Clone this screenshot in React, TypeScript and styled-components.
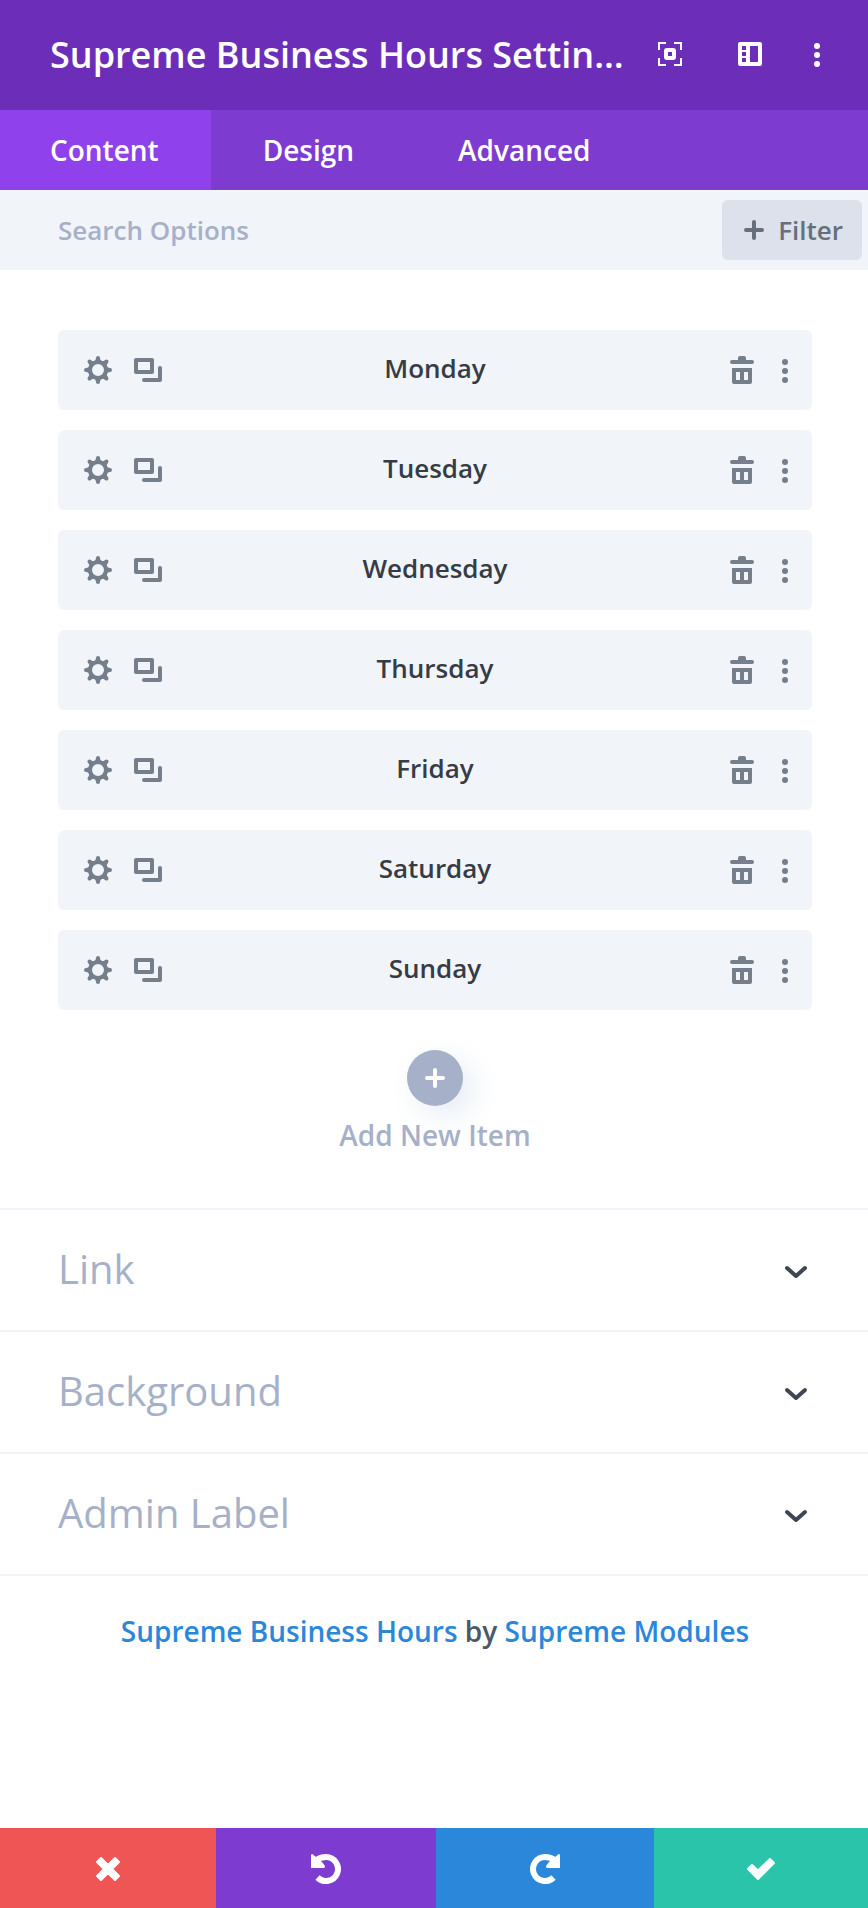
import React, { useState } from "react";
import styled, { createGlobalStyle } from "styled-components";

const GlobalStyle = createGlobalStyle`
  *, *::before, *::after { box-sizing: border-box; }
  body {
    margin: 0;
    background: #ffffff;
    font-family: "Open Sans", "Noto Sans", sans-serif;
    font-weight: 600;
  }
  button, input { font: inherit; }
  button { border: 0; padding: 0; background: none; cursor: pointer; }
  svg { display: block; }
`;

const Modal = styled.div`
  display: flex;
  flex-direction: column;
  min-height: 100vh;
`;

const Header = styled.header`
  display: flex;
  align-items: center;
  height: 110px;
  padding: 0 37px 0 50px;
  background: #6c2eb9;
  color: #ffffff;
`;

const Title = styled.h1`
  flex: 1;
  min-width: 0;
  margin: 0 26px 0 0;
  overflow: hidden;
  text-overflow: ellipsis;
  white-space: nowrap;
  font-size: 36px;
  line-height: 50px;
  font-weight: 600;
`;

const HeaderActions = styled.div`
  display: flex;
  align-items: center;
  gap: 52px;
  padding-bottom: 2px;
`;

const IconButton = styled.button<{ $pull?: boolean }>`
  display: flex;
  align-items: center;
  justify-content: center;
  width: 28px;
  height: 32px;
  margin-left: ${(p) => (p.$pull ? "-13px" : "0")};
  color: inherit;
`;

const Tabs = styled.div`
  display: flex;
  height: 80px;
  background: #7e3bd0;
`;

const Tab = styled.button<{ $active: boolean }>`
  padding: 0 52px;
  background: ${(p) => (p.$active ? "#8f42ec" : "transparent")};
  color: #ffffff;
  font-size: 28px;
  line-height: 40px;
  &:first-child { padding-left: 50px; }
`;

const SearchBar = styled.div`
  display: flex;
  align-items: center;
  height: 80px;
  padding: 0 6px 0 58px;
  background: #f1f4f9;
`;

const SearchInput = styled.input`
  flex: 1;
  min-width: 0;
  height: 60px;
  padding: 0;
  border: 0;
  outline: 0;
  background: transparent;
  color: #4c5866;
  font-size: 26px;
  &::placeholder { color: #a6b0c8; opacity: 1; }
`;

const FilterButton = styled.button`
  display: flex;
  align-items: center;
  gap: 14px;
  height: 60px;
  padding: 0 19px 0 22px;
  border-radius: 6px;
  background: #dce1eb;
  color: #66707c;
  font-size: 26px;
  line-height: 40px;
`;

const ItemsPanel = styled.section`
  display: flex;
  flex-direction: column;
  align-items: center;
  padding: 60px 56px 53px 58px;
`;

const ItemList = styled.ul`
  display: flex;
  flex-direction: column;
  gap: 20px;
  width: 100%;
  margin: 0 0 30px;
  padding: 0;
  list-style: none;
`;

const Item = styled.li`
  display: grid;
  grid-template-columns: 120px 1fr 120px;
  align-items: center;
  height: 80px;
  border-radius: 6px;
  background: #f1f4f9;
  color: #747f8b;
`;

const ItemTools = styled.div<{ $end?: boolean }>`
  display: flex;
  justify-content: ${(p) => (p.$end ? "flex-end" : "flex-start")};
  gap: ${(p) => (p.$end ? "15px" : "22px")};
  padding: ${(p) => (p.$end ? "0 13px 0 0" : "0 0 0 26px")};
`;

const ItemName = styled.span`
  padding-bottom: 4px;
  color: #363c46;
  font-size: 26px;
  line-height: 40px;
  text-align: center;
`;

const AddButton = styled.button`
  display: flex;
  flex-direction: column;
  align-items: center;
  gap: 9px;
  padding-top: 10px;
  color: #a6b0c8;
  font-size: 28px;
  line-height: 40px;
`;

const AddCircle = styled.span`
  display: flex;
  align-items: center;
  justify-content: center;
  width: 56px;
  height: 56px;
  border-radius: 50%;
  background: #a6b0c8;
  color: #ffffff;
  box-shadow: 10px 10px 32px #e4ebf4;
`;

const Toggle = styled.button`
  display: flex;
  align-items: center;
  justify-content: space-between;
  width: 100%;
  height: 122px;
  padding: 0 60px 2px 58px;
  border-top: 2px solid #f1f4f9;
  color: #a6b0c8;
  font-size: 40px;
  line-height: 56px;
  font-weight: 400;
  text-align: left;
`;

const Chevron = styled.span`
  padding-top: 6px;
  color: #3d4652;
`;

const Credits = styled.p`
  flex: 1;
  margin: 0;
  padding: 35px 20px 35px 22px;
  border-top: 2px solid #f1f4f9;
  color: #4c5866;
  font-size: 28px;
  line-height: 40px;
  text-align: center;
`;

const CreditLink = styled.a`
  color: #2b87da;
  text-decoration: none;
`;

const FooterBar = styled.footer`
  position: sticky;
  bottom: 0;
  display: grid;
  grid-template-columns: 216fr 220fr 218fr 214fr;
  height: 80px;
`;

const FooterButton = styled.button<{ $color: string }>`
  display: flex;
  align-items: center;
  justify-content: center;
  padding-top: 2px;
  background: ${(p) => p.$color};
  color: #ffffff;
`;

const DotsIcon = () => (
  <svg width="6" height="26" viewBox="0 0 6 26" fill="currentColor" aria-hidden="true">
    <circle cx="3" cy="5" r="3" />
    <circle cx="3" cy="14" r="3" />
    <circle cx="3" cy="23" r="3" />
  </svg>
);

const FocusIcon = () => (
  <svg width="24" height="24" viewBox="0 0 24 24" fill="none" stroke="currentColor" strokeWidth="2" aria-hidden="true">
    <path d="M1 8V1H8M16 1H23V8M23 16V23H16M8 23H1V16" />
    <rect x="8" y="8" width="8" height="8" rx="1" strokeWidth="4" />
  </svg>
);

const PanelIcon = () => (
  <svg width="24" height="24" viewBox="0 0 24 24" fill="currentColor" fillRule="evenodd" aria-hidden="true">
    <path d="M2 0H22Q24 0 24 2V22Q24 24 22 24H2Q0 24 0 22V2Q0 0 2 0ZM12 4V20H20V4ZM4 4V8H8V4ZM4 10V14H8V10ZM4 16V20H8V16Z" />
  </svg>
);

const PlusIcon = () => (
  <svg width="20" height="20" viewBox="0 0 20 20" fill="none" stroke="currentColor" strokeWidth="4" strokeLinecap="round" aria-hidden="true">
    <path d="M10 2V18M2 10H18" />
  </svg>
);

const GEAR_ANGLES = [0, 45, 90, 135, 180, 225, 270, 315];

const GearIcon = () => (
  <svg width="28" height="28" viewBox="0 0 28 28" fill="currentColor" aria-hidden="true">
    <circle cx="14" cy="14" r="8" fill="none" stroke="currentColor" strokeWidth="4" />
    {GEAR_ANGLES.map((angle) => (
      <path key={angle} transform={`rotate(${angle} 14 14)`} d="M10 5.500Q12 4.500 12 2Q12 0 14 0T16 2Q16 4.500 18 5.500L16 7H12Z" />
    ))}
  </svg>
);

const DuplicateIcon = () => (
  <svg width="28" height="28" viewBox="0 0 28 28" fill="none" stroke="currentColor" strokeWidth="4" strokeLinecap="round" strokeLinejoin="round" aria-hidden="true">
    <path d="M2 4H18V16H2ZM26 12V24H10" />
  </svg>
);

const TrashIcon = () => (
  <svg width="24" height="28" viewBox="0 0 24 28" fill="currentColor" fillRule="evenodd" aria-hidden="true">
    <path d="M8 4V2Q8 0 10 0H14Q16 0 16 2V4H22Q24 4 24 6T22 8H2Q0 8 0 6T2 4Z" />
    <path d="M2 12H22V26Q22 28 20 28H4Q2 28 2 26ZM6 16V24H10V16ZM14 16V24H18V16Z" />
  </svg>
);

const ChevronIcon = () => (
  <svg width="24" height="14" viewBox="0 0 24 14" fill="none" stroke="currentColor" strokeWidth="4" strokeLinecap="round" strokeLinejoin="round" aria-hidden="true">
    <path d="M3 3L12 11L21 3" />
  </svg>
);

const CloseIcon = () => (
  <svg width="24" height="24" viewBox="0 0 24 24" fill="currentColor" stroke="currentColor" strokeWidth="2" strokeLinejoin="round" aria-hidden="true">
    <path d="M5 1L12 8L19 1L23 5L16 12L23 19L19 23L12 16L5 23L1 19L8 12L1 5Z" />
  </svg>
);

const TurnIcon = ({ forward = false }: { forward?: boolean }) => (
  <svg width="30" height="30" viewBox="0 0 30 30" aria-hidden="true">
    <g transform={forward ? "matrix(-1 0 0 1 30 0)" : undefined}>
      <path d="M5 6.500C8 4 11 3 15 3A12 12 0 1 1 6.500 23.500" fill="none" stroke="currentColor" strokeWidth="6" />
      <path d="M0 1Q1 -1 2.500 1L6 4L11 8L14 12Q14 14 13 14H0Z" fill="currentColor" />
    </g>
  </svg>
);

const CheckIcon = () => (
  <svg width="28" height="22" viewBox="0 0 28 22" fill="currentColor" stroke="currentColor" strokeWidth="2" strokeLinejoin="round" aria-hidden="true">
    <path d="M1 11L5 7L11 12.500L23 1L27 5L11 21Z" />
  </svg>
);

const TABS = ["Content", "Design", "Advanced"];
const DAYS = ["Monday", "Tuesday", "Wednesday", "Thursday", "Friday", "Saturday", "Sunday"];
const SECTIONS = ["Link", "Background", "Admin Label"];

export default function App() {
  const [tab, setTab] = useState("Content");
  return (
    <>
      <GlobalStyle />
      <Modal>
        <Header>
          <Title>Supreme Business Hours Settings</Title>
          <HeaderActions>
            <IconButton aria-label="Expand"><FocusIcon /></IconButton>
            <IconButton aria-label="Dock panel"><PanelIcon /></IconButton>
            <IconButton $pull aria-label="More options"><DotsIcon /></IconButton>
          </HeaderActions>
        </Header>
        <Tabs role="tablist">
          {TABS.map((name) => (
            <Tab key={name} role="tab" aria-selected={tab === name} $active={tab === name} onClick={() => setTab(name)}>
              {name}
            </Tab>
          ))}
        </Tabs>
        <SearchBar>
          <SearchInput type="text" aria-label="Search Options" placeholder="Search Options" />
          <FilterButton><PlusIcon />Filter</FilterButton>
        </SearchBar>
        <ItemsPanel>
          <ItemList>
            {DAYS.map((day) => (
              <Item key={day}>
                <ItemTools>
                  <IconButton aria-label={`${day} settings`}><GearIcon /></IconButton>
                  <IconButton aria-label={`Duplicate ${day}`}><DuplicateIcon /></IconButton>
                </ItemTools>
                <ItemName>{day}</ItemName>
                <ItemTools $end>
                  <IconButton aria-label={`Delete ${day}`}><TrashIcon /></IconButton>
                  <IconButton aria-label={`More for ${day}`}><DotsIcon /></IconButton>
                </ItemTools>
              </Item>
            ))}
          </ItemList>
          <AddButton>
            <AddCircle><PlusIcon /></AddCircle>
            Add New Item
          </AddButton>
        </ItemsPanel>
        {SECTIONS.map((name) => (
          <Toggle key={name} aria-expanded={false}>
            {name}
            <Chevron><ChevronIcon /></Chevron>
          </Toggle>
        ))}
        <Credits>
          <CreditLink href="#hours">Supreme Business Hours</CreditLink> by{" "}
          <CreditLink href="#modules">Supreme Modules</CreditLink>
        </Credits>
        <FooterBar>
          <FooterButton $color="#ef5555" aria-label="Discard changes"><CloseIcon /></FooterButton>
          <FooterButton $color="#7e3bd0" aria-label="Undo"><TurnIcon /></FooterButton>
          <FooterButton $color="#2b87da" aria-label="Redo"><TurnIcon forward /></FooterButton>
          <FooterButton $color="#29c4a9" aria-label="Save changes"><CheckIcon /></FooterButton>
        </FooterBar>
      </Modal>
    </>
  );
}
